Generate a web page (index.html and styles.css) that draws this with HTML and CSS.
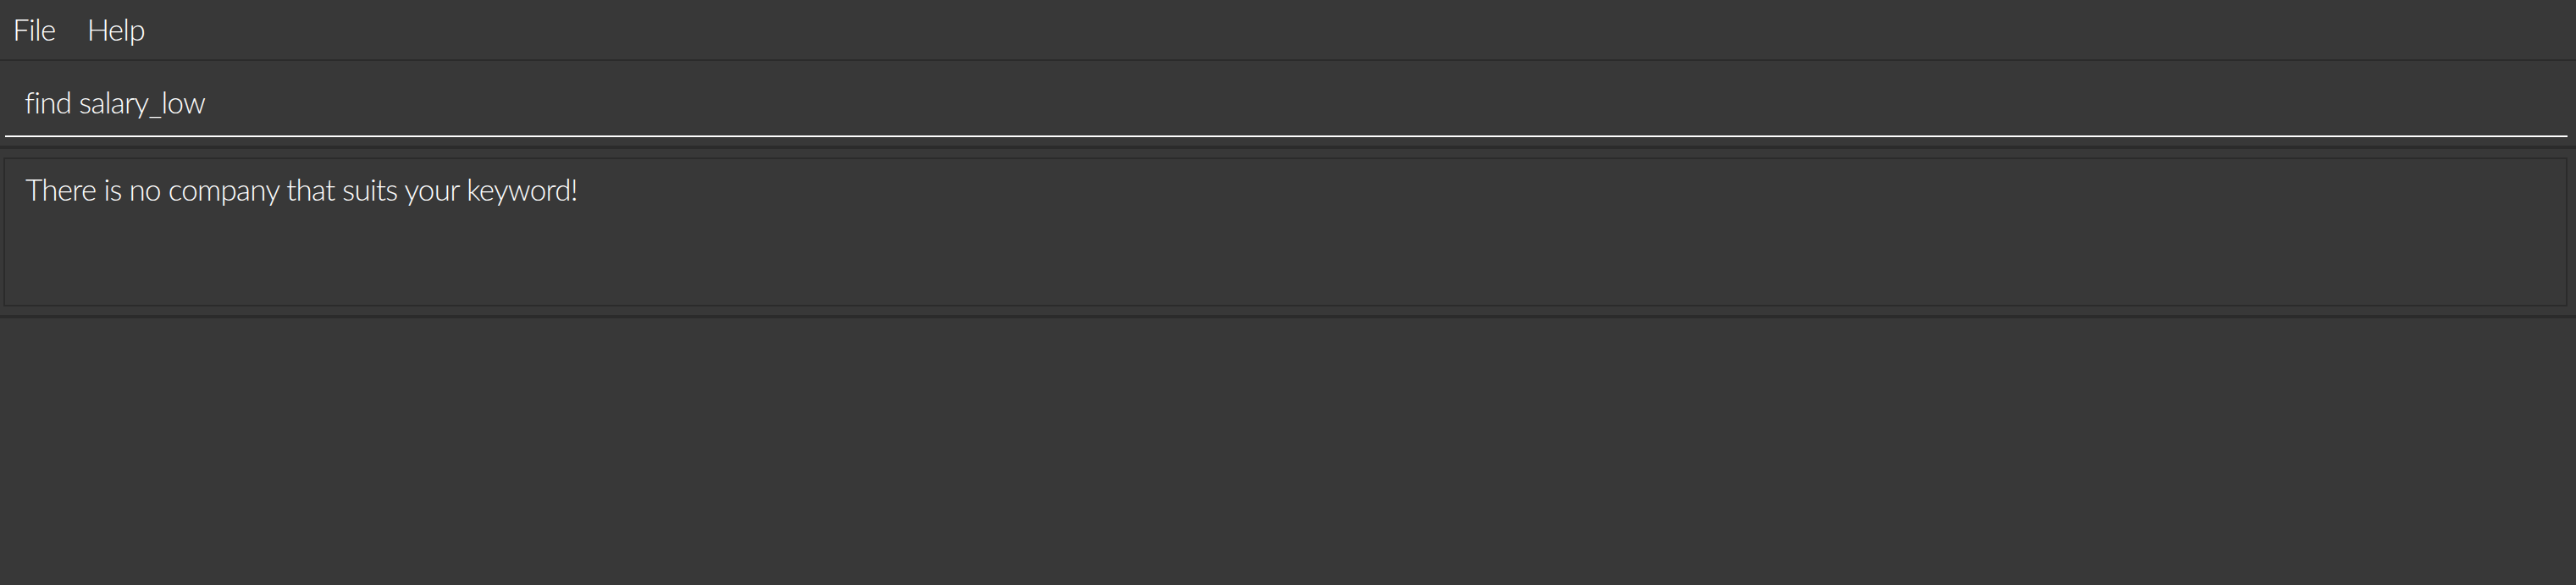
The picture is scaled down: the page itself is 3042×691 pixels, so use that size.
FILE: index.html
```html
<!DOCTYPE html>
<html>
<head>
<meta charset="utf-8">
<link rel="stylesheet" href="styles.css">
</head>
<body>
<div class="app">
  <nav class="menubar">
    <span class="menu-item">File</span>
    <span class="menu-item">Help</span>
  </nav>
  <section class="command-pane">
    <div class="command-field">find salary_low</div>
  </section>
  <section class="result-pane">
    <div class="result-box">There is no company that suits your keyword!</div>
  </section>
  <section class="list-pane"></section>
</div>
</body>
</html>
```
FILE: styles.css
```css
html, body {
  margin: 0;
  padding: 0;
  background: #383838;
}
.app {
  font-family: "Lato", "Open Sans", sans-serif;
  font-weight: 300;
  color: #ffffff;
  font-size: 35px;
  line-height: 36px;
  letter-spacing: -0.7px;
  font-variant-ligatures: none;
  display: flex;
  flex-direction: column;
}
.menubar {
  display: flex;
  gap: 37px;
  height: 72px;
  box-sizing: border-box;
  padding: 16px 0 0 15px;
  border-bottom: 2px solid #2b2b2b;
}
.command-pane {
  padding: 0 10px 10px 6px;
  border-bottom: 4px solid #2b2b2b;
}
.command-field {
  padding: 30px 0 22px 23px;
  border-bottom: 2px solid #ffffff;
}
.result-pane {
  padding: 10px 10px 10px 4px;
  border-bottom: 4px solid #2b2b2b;
}
.result-box {
  box-sizing: content-box;
  height: 155px;
  padding: 17px 0 0 24px;
  border: 2px solid #2b2b2b;
}
.list-pane {
  flex: 1;
}
```
